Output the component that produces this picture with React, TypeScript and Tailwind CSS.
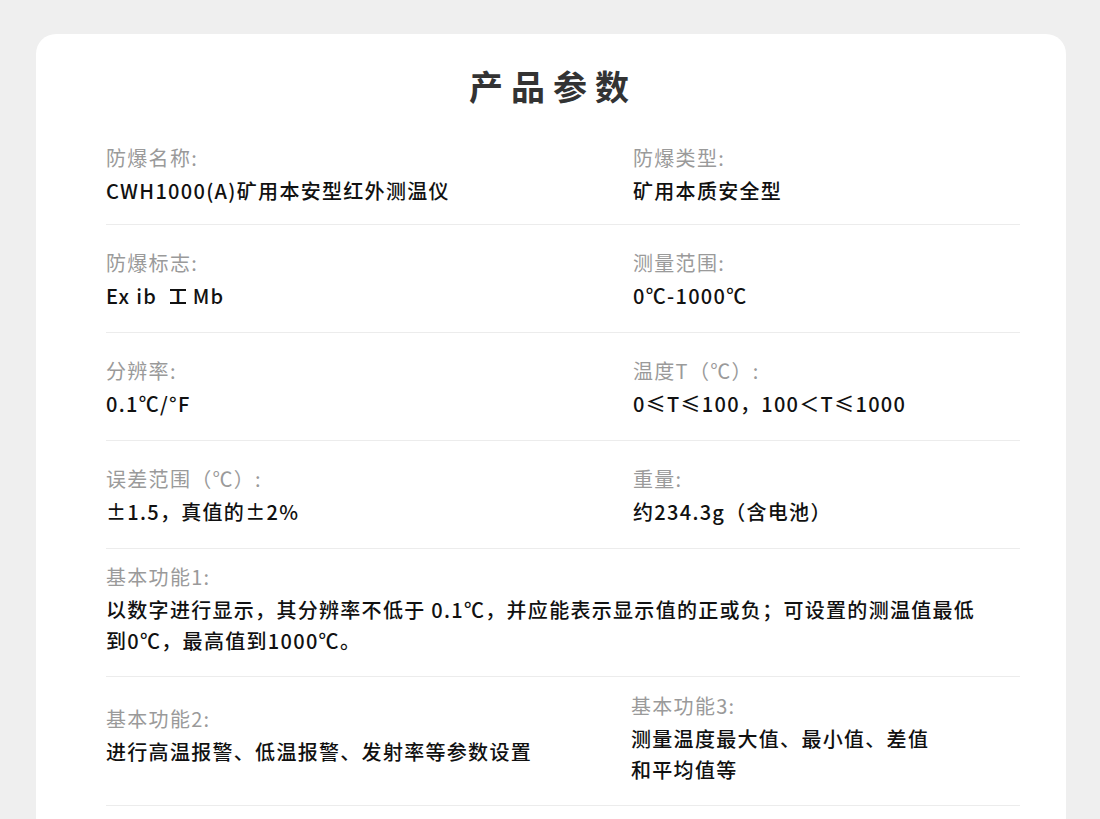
import React from "react";

const font = { fontFamily: '"Noto Sans CJK SC", "Noto Sans", sans-serif' };

function Cell({ label, lines, className = "" }: { label: string; lines: React.ReactNode[]; className?: string }) {
  return (
    <div className={"flex flex-col justify-center " + className}>
      <div className="text-[20px] leading-[31px] tracking-[1.3px] text-[#9a9a9a] font-normal mb-[2px]">{label}</div>
      {lines.map((l, i) => (
        <div key={i} className="text-[20px] leading-[31px] tracking-[1.3px] text-[#111111] font-medium whitespace-nowrap">
          {l}
        </div>
      ))}
    </div>
  );
}

export default function App() {
  const exMark = (
    <>
      Ex ib{" "}
      <span className="relative inline-flex justify-center w-[16px] leading-[20px] tracking-normal ml-[7px] mr-[1px]">
        Ⅰ
        <span className="absolute left-0 right-0 top-[3.7px] h-[2px] bg-[#111111]"></span>
        <span className="absolute left-0 right-0 top-[16.3px] h-[2px] bg-[#111111]"></span>
      </span>{" "}
      Mb
    </>
  );
  const rows: [string, React.ReactNode[], string, React.ReactNode[]][] = [
    ["防爆名称:", ["CWH1000(A)矿用本安型红外测温仪"], "防爆类型:", ["矿用本质安全型"]],
    ["防爆标志:", [exMark], "测量范围:", ["0℃-1000℃"]],
    ["分辨率:", ["0.1℃/°F"], "温度T（℃）:", ["0≤T≤100，100＜T≤1000"]],
    ["误差范围（℃）:", ["±1.5，真值的±2%"], "重量:", ["约234.3g（含电池）"]],
  ];
  return (
    <div className="min-h-[819px] bg-[#efefef] pt-[34px]" style={font}>
      <div className="ml-[36px] w-[1030px] bg-white rounded-t-[20px] pb-[40px]">
        <div className="pt-[26px] text-center text-[34px] leading-[51px] font-bold text-[#333333] tracking-[8px] pl-[4px]">
          产品参数
        </div>
        <div className="pl-[70px] pr-[46px] pt-[7px]">
          {rows.map((r, i) => (
            <div
              key={i}
              className={
                i === 0
                  ? "grid grid-cols-[527px_1fr] min-h-[107px] pt-[20px] pb-[15px] border-b border-[#ececec]"
                  : "grid grid-cols-[527px_1fr] min-h-[108px] py-[18px] border-b border-[#ececec]"
              }
            >
              <Cell label={r[0]} lines={r[1]} />
              <Cell label={r[2]} lines={r[3]} />
            </div>
          ))}
          <div className="flex items-center min-h-[108px] pt-[12px] pb-[20px] border-b border-[#ececec]">
            <Cell
              label="基本功能1:"
              lines={[
                "以数字进行显示，其分辨率不低于 0.1℃，并应能表示显示值的正或负；可设置的测温值最低",
                "到0℃，最高值到1000℃。",
              ]}
            />
          </div>
          <div className="grid grid-cols-[525px_1fr] min-h-[108px] pt-[13px] pb-[20px] border-b border-[#ececec]">
            <Cell className="pb-[5px]" label="基本功能2:" lines={["进行高温报警、低温报警、发射率等参数设置"]} />
            <Cell label="基本功能3:" lines={["测量温度最大值、最小值、差值", "和平均值等"]} />
          </div>
        </div>
      </div>
    </div>
  );
}
